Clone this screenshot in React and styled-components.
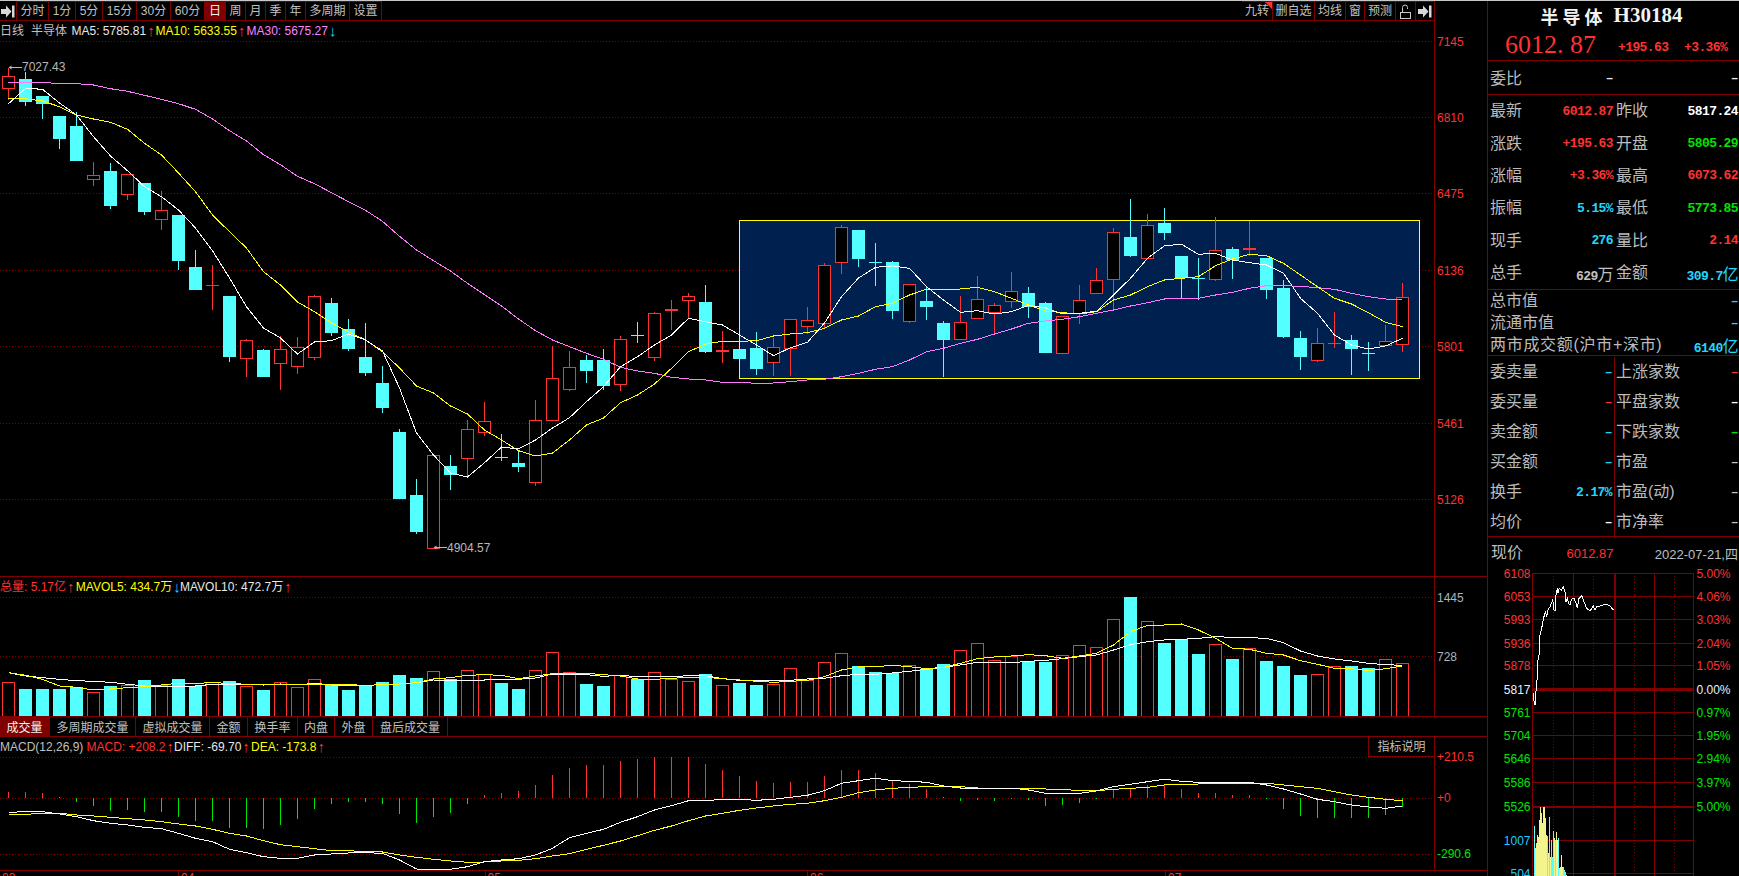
import React from "react";
import styled, { createGlobalStyle } from "styled-components";

const RED = "#ff3232";
const CYAN = "#54ffff";
const DARK = "#800000";
const GREEN = "#00e600";
const SKY = "#20d8ff";
const GRAY = "#c0c0c0";
const SANS = `"Liberation Sans", "Noto Sans CJK SC", sans-serif`;

const candles = [
  [76.3,87.7,67.7,98.7,"r"],[79,101,72,105,"c"],[96,102.7,96,117.7,"c"],[115.7,138,115.7,148,"c"],[126,160,112,160,"c"],
  [175.3,178.7,162.3,185,"r"],[171,205,163,208,"c"],[174.3,193.7,174.3,199,"r"],[183,211,183,214,"c"],[210.3,218.7,191,229,"r"],
  [215,260,215,269,"c"],[267,289,250,289,"c"],[285,285,265,309,"r"],[296,356,296,361,"c"],[340.3,357.7,339,376,"r"],
  [350,376,349,376,"c"],[349.3,362.7,336,389,"r"],[347.3,365.7,337,373,"r"],[296.3,356.7,295,359,"r"],[303,332,298,335,"c"],
  [329,348,319,350,"c"],[357,372,323,375,"c"],[383,407,366,412,"c"],[432,498,429,498,"c"],[495,531,479,533,"c"],
  [455.3,547.7,455.3,547.7,"r"],[466,474,455,489,"c"],[429.3,457.7,420,477,"r"],[421.3,431.7,402,434.7,"r"],[457,457,434,460,"c"],
  [463,466,450,471,"c"],[420.3,481.7,400,485,"r"],[378.3,419.7,346,420,"r"],[367.3,388.7,351,390,"r"],[360,370,355,382,"c"],
  [360,385,349,389,"c"],[339.3,383.7,336,390,"r"],[335,335,322,342,"c"],[313.3,356.7,312,360,"r"],[309,311,300,329,"r"],
  [296.3,299.7,293,318,"r"],[302,351,285,352,"c"],[350,352,331,362,"r"],[349,358,349,358,"c"],[348,368,332,374,"c"],
  [347.3,361.7,338,375,"r"],[319.3,347.7,319.3,375,"r"],[320,325.7,307,333,"r"],[265.3,322.7,263,328,"r"],[227.3,261.7,225,273,"r"],
  [230,258,230,266,"c"],[262,262,243,285,"c"],[262,310,261,318,"c"],[284.3,320.7,284.3,322,"r"],[301,306,287,319,"c"],
  [323,339,321,376,"c"],[322.3,338.7,296,338.7,"r"],[299.3,317.7,276,317.7,"r"],[305.3,311.7,303,334,"r"],[291.3,300.7,272,307,"r"],
  [293,306,287,317,"c"],[303,352,302,352,"c"],[316.3,352.7,316.3,352.7,"r"],[300.3,312.7,285,323,"r"],[280.3,292.7,268,292.7,"r"],
  [232.3,279.3,228,310,"r"],[237,255,199,256,"c"],[225.3,257.7,214,257.7,"r"],[223,232,208,239,"c"],[256,277,256,298,"c"],
  [278,278,258,299,"c"],[250.3,278.7,217,280,"r"],[249,259,247,278,"c"],[248,250,221,255,"r"],[258,289,258,298,"c"],
  [288,336,280,337,"c"],[338,356,331,369,"c"],[343.3,360,328,361,"r"],[343,343,312,347,"r"],[340,348,335,374,"c"],
  [353,353,342,370,"c"],[341.3,344.7,325,344.7,"r"],[297.3,343.7,283,351,"r"],
];

const ma5 = [103.7,88.3,89.3,103,115,136.7,156,170.7,186.7,196.7,210,228,250.7,278,306.7,328,338,354,342,340.7,334,340,351,388,433,455,473,477,462.7,447,449,440,428,417.7,401.7,386.7,366.7,356.7,345,335,318.3,321.7,325,335,345,355.7,347.7,342.3,323,296.7,278,267.3,266,268.3,286.7,300,312.3,310.7,314,311.7,305.3,308,314,313.3,311.3,295,278.3,258.3,245.7,244.3,254.3,253.3,260,262.7,265,273.3,298.3,313.3,335,345,349,346,338.3];
const ma10 = [98.3,98.7,101,106.7,115,119,122.3,129.3,143.3,155,173,191.7,215,231.7,248,271.7,285,302,311.7,323,331.7,340,351.7,368,386,393,406,414,430,440,450.7,456,453,440,425,418,402.7,395,384,368.3,351.7,344,341.3,341.3,340.7,336,334,332.7,328.3,320,316,306.7,303.3,295,289.3,289.3,289,287.3,291.7,298.3,305,311,312.7,314,311.7,300,295,286.7,280,278.3,276.7,265.7,259,254.3,255.7,263.3,275,286.7,298.3,304,312.7,322.3,326.7];
const ma30 = [82.7,82,82.7,83.3,83.7,85,88.7,91.3,95.3,99.3,103.7,109.3,119,130.7,141,154.7,164.7,176.3,183.7,192.7,201.7,210.3,221.3,236.3,250,260.7,271,283.3,294.7,306,319,330.7,340,346.7,353.3,359.3,367.3,371,373.3,377.3,379,380,382.3,382.3,383.3,383,381.7,380,379.3,376.7,373.3,369.3,366.7,360,351.7,348.3,343.3,339.3,334,329,323.3,321,319.3,316.7,313.3,310,306,302.7,299,298.3,298.3,295,292.3,288.3,285.7,285.7,286.3,287.7,289.3,293.3,296.7,299,299.3];

// the lower panes were read in a zoom where y = (page y - 570) * 3
const lower = (v) => 570 + v / 3;
const volTop = [337,357,357,357,351,367,348,346,330,344,327,348,336,333,348,360,337,352,328,345,360,345,336,315,324,304,327,301,313,339,357,301,247,307,342,348,314,327,307,328,334,312,346,339,345,343,295,329,277,250,289,306,309,286,296,282,241,220,271,259,274,276,256,226,232,148,81,154,219,208,252,223,267,235,273,288,315,313,289,288,294,268,280];
const mavol10 = [308,318,323,328,332,334,337,343,348,348,348,348,343,342,343,345,343,345,340,345,346,346,344,342,338,330,330,330,330,328,328,324,312,312,314,319,316,320,320,320,317,317,326,331,331,331,331,327,325,317,313,313,309,304,298,292,285,277,278,278,274,271,266,260,255,240,224,215,210,208,205,200,202,203,205,218,243,258,267,273,280,284,286];
const mavol5 = [308,316,328,348,352,360,357,353,350,345,340,340,338,340,343,345,342,345,343,345,344,346,344,342,338,327,323,316,314,316,326,318,311,310,310,314,318,327,328,325,322,322,326,330,334,337,334,331,320,300,290,290,286,290,296,292,280,266,261,258,254,257,265,258,250,225,185,166,165,162,180,205,235,238,250,255,272,283,295,296,302,296,288];
const hist = [667,666,669,681,696,708,723,720,726,726,741,753,753,774,774,777,765,747,717,702,696,696,702,732,759,741,729,702,675,669,663,645,615,594,585,585,573,567,561,561,561,582,600,618,633,639,636,636,618,600,600,609,633,642,657,682,693,690,693,688,690,708,705,699,688,657,657,645,642,657,669,669,675,675,688,717,738,744,744,744,744,735,711];
const greenTiny = new Set([3, 55]);
const diff = [727,725,725,732,740,752,760,765,772,776,790,805,815,838,848,860,865,865,855,852,849,848,850,870,897,898,898,890,875,870,866,855,835,803,790,778,757,740,720,707,692,691,689,688,691,688,682,676,662,640,632,625,632,634,637,648,654,654,654,654,660,670,670,670,663,650,643,635,628,634,637,637,637,637,645,657,672,688,695,705,711,715,708];
const dea = [733,733,730,730,735,738,742,746,750,755,762,768,778,790,798,812,824,830,836,842,842,845,846,855,862,868,873,877,876,873,871,866,858,851,838,826,813,797,781,768,752,738,730,721,714,708,703,700,692,682,668,660,655,652,650,650,650,654,654,654,655,657,658,662,662,658,655,652,645,643,642,640,640,640,640,645,650,655,665,675,682,688,692];

const cx = (i) => 8.5 + 17 * i;
const pts = (arr, f = (v) => v) => arr.map((v, i) => `${cx(i)},${f(v).toFixed(1)}`).join(" ");

const GlobalStyle = createGlobalStyle`
  html, body { margin: 0; padding: 0; background: #000; overflow: hidden; }
  * { box-sizing: border-box; }
`;

const Root = styled.div`
  display: flex;
  width: 1739px;
  height: 876px;
  overflow: hidden;
  background: #000;
  border-top: 1px solid #c8c8c8;
  font-family: ${SANS};
  font-size: 12px;
  color: ${GRAY};
`;
const Main = styled.main`
  display: flex;
  flex-direction: column;
  width: 1487px;
  flex: none;
`;
const Pane = styled.section`
  display: grid;
  grid-template-columns: 1434px 53px;
  border-bottom: 1px solid ${DARK};
  height: ${(p) => p.$h}px;
  flex: none;
`;
const PaneBody = styled.div`
  display: flex;
  flex-direction: column;
  min-width: 0;
`;
const Axis = styled.div`
  border-left: 1px solid ${DARK};
  padding: ${(p) => p.$top}px 0 0 2px;
`;
const AxisTick = styled.div`
  height: ${(p) => p.$h}px;
  line-height: 16px;
  color: ${(p) => p.$c};
`;
const Toolbar = styled.nav`
  display: flex;
  height: 20px;
  flex: none;
  border-bottom: 1px solid ${DARK};
`;
const ToolGroup = styled.div`
  display: flex;
  margin-left: ${(p) => (p.$end ? "auto" : "0")};
`;
const ToolButton = styled.div`
  position: relative;
  display: flex;
  align-items: center;
  justify-content: center;
  width: ${(p) => p.$w}px;
  height: 19px;
  border-top: 1px solid ${DARK};
  border-right: ${(p) => (p.$last ? "0" : `1px solid ${DARK}`)};
  background: ${(p) => (p.$active ? DARK : "transparent")};
  color: ${(p) => (p.$active ? "#f0f0f0" : GRAY)};
  font-size: 12px;
  line-height: 18px;
  white-space: nowrap;
`;
const IconCell = styled(ToolButton)`
  border-top-color: ${(p) => (p.$plain ? "transparent" : DARK)};
`;
const Corner = styled.i`
  position: absolute;
  top: 0;
  right: 0;
  border-style: solid;
  border-width: 0 7px 7px 0;
  border-color: transparent ${RED} transparent transparent;
`;
const LegendRow = styled.div`
  display: flex;
  align-items: center;
  height: 20px;
  flex: none;
  white-space: nowrap;
  line-height: 20px;
`;
const Legend = styled.span`
  display: inline-block;
  flex: none;
  width: ${(p) => (p.$w ? `${p.$w}px` : "auto")};
  color: ${(p) => p.$c || GRAY};
`;
const Arrow = styled.span`
  display: inline-block;
  margin-left: 1px;
  color: ${(p) => p.$c};
  font-size: 15px;
  line-height: 14px;
  width: 6px;
  vertical-align: -1px;
`;
const IndexNote = styled.div`
  display: flex;
  align-items: center;
  justify-content: center;
  flex: none;
  width: 66px;
  height: 20px;
  margin-left: auto;
  border-left: 1px solid ${DARK};
  border-bottom: 1px solid ${DARK};
`;
const Chart = styled.svg`
  display: block;
  flex: none;
`;
const ChartText = styled.text`
  font-family: ${SANS};
  font-size: 12px;
  fill: ${(p) => p.$c || "#b8b8b8"};
`;
const TabBar = styled.div`
  display: flex;
  height: 20px;
  flex: none;
  border-bottom: 1px solid ${DARK};
`;
const Tab = styled.div`
  display: flex;
  align-items: center;
  justify-content: center;
  width: ${(p) => p.$w}px;
  height: 19px;
  border-right: 1px solid ${DARK};
  background: ${(p) => (p.$active ? DARK : "transparent")};
  color: ${(p) => (p.$active ? "#f4f4f4" : GRAY)};
  font-size: 12px;
`;
const TimeRow = styled.div`
  display: flex;
  flex: 1;
  overflow: hidden;
`;
const TimeCell = styled.div`
  width: ${(p) => p.$w}px;
  flex: none;
  padding-left: 2px;
  border-left: ${(p) => (p.$tick ? `1px solid ${DARK}` : "0")};
  color: ${RED};
  font-size: 12px;
  line-height: 14px;
`;

const Panel = styled.aside`
  display: flex;
  flex-direction: column;
  flex: 1;
  min-width: 0;
  border-left: 1px solid ${DARK};
`;
const Block = styled.div`
  flex: none;
  height: ${(p) => p.$h}px;
  border-bottom: ${(p) => (p.$line ? `1px solid ${DARK}` : "0")};
`;
const Title = styled.h1`
  display: flex;
  align-items: center;
  justify-content: center;
  gap: 7px;
  height: 29px;
  margin: 0 0 0 -4px;
  color: #f2f2f2;
  font: bold 21px "Liberation Serif", serif;
`;
const TitleName = styled.span`
  font: bold 18px "Noto Sans CJK SC", sans-serif;
  letter-spacing: 4px;
`;
const PriceLine = styled.div`
  display: flex;
  align-items: center;
  height: 30px;
  padding-left: 17px;
`;
const BigPrice = styled.span`
  width: 113px;
  flex: none;
  color: ${RED};
  font: 26px "Liberation Serif", serif;
  white-space: pre;
`;
const numeric = `
  font-family: "Liberation Mono", "Noto Sans CJK SC", monospace;
  font-weight: bold;
  font-size: 13px;
  letter-spacing: -0.6px;
`;
const Change = styled.span`
  ${numeric}
  width: ${(p) => p.$w}px;
  flex: none;
  padding-top: 5px;
  color: ${RED};
`;
const Row = styled.div`
  display: flex;
  align-items: center;
  justify-content: space-between;
  height: ${(p) => p.$h}px;
  padding: 0 1px 0 2px;
`;
const Label = styled.span`
  color: #bcbcbc;
  font-size: 16px;
  line-height: 18px;
  white-space: nowrap;
  letter-spacing: ${(p) => p.$track || 0}px;
`;
const Value = styled.span`
  ${numeric}
  color: ${(p) => p.$c};
  white-space: nowrap;
`;
const Unit = styled.span`
  font: 16px "Noto Sans CJK SC", sans-serif;
`;
const StatGrid = styled.div`
  display: grid;
  grid-template-columns: 127px 1fr;
  grid-auto-rows: ${(p) => p.$row}px;
  padding-top: ${(p) => p.$pad || 0}px;
`;
const Cell = styled.div`
  display: flex;
  align-items: center;
  justify-content: space-between;
  min-width: 0;
  padding: ${(p) => (p.$right ? "0 1px 0 1px" : "0 2px 0 2px")};
  border-right: ${(p) => (p.$divide ? `1px solid ${DARK}` : "0")};
`;
const Blank = styled.span``;
const QuoteRow = styled.div`
  display: flex;
  align-items: center;
  justify-content: space-between;
  height: 26px;
  padding: 6px 1px 0 3px;
  flex: none;
`;
const QuotePrice = styled.span`
  margin-left: 2px;
  color: ${RED};
  font-size: 13px;
`;
const QuoteDate = styled.span`
  color: #b8c0c8;
  font-size: 13px;
`;

const JumpIcon = () => (
  <svg width="14" height="13" viewBox="0 0 14 13" fill="#d8d8d8">
    <path d="M0 4h5V0.5L10.5 6.5 5 12.5V9H0z" />
    <rect x="11" y="0.5" width="2.5" height="12" />
  </svg>
);
const LockIcon = () => (
  <svg width="13" height="15" viewBox="0 0 13 15" fill="none" stroke="#c8c8c8" strokeWidth="1" shapeRendering="crispEdges">
    <rect x="1.5" y="8.5" width="10" height="6" />
    <path d="M3.5 8V3.5Q3.5 1 6 1T8.5 3.5V5" shapeRendering="auto" />
  </svg>
);

const Grid = ({ ys }) =>
  ys.map((y) => (
    <line key={y} x1="0" x2="1434" y1={y + 0.5} y2={y + 0.5} stroke={DARK} strokeDasharray="1 2" shapeRendering="crispEdges" />
  ));

const Line = ({ points, c }) => (
  <polyline points={points} fill="none" stroke={c} strokeWidth="1" shapeRendering="crispEdges" />
);

const Candle = ({ d, i }) => {
  const [top, bottom, high, low, kind] = d;
  const x = cx(i);
  const c = kind === "r" ? RED : CYAN;
  const flat = bottom - top < 3;
  const t = Math.round(top);
  const h = Math.round(bottom) - t;
  return (
    <g shapeRendering="crispEdges">
      <line x1={x} x2={x} y1={Math.round(high)} y2={Math.round(low) + 1} stroke={c} />
      {flat ? (
        <rect x={x - 6.5} y={t} width="13" height={Math.max(1, h)} fill={c} />
      ) : kind === "r" ? (
        <rect x={x - 6} y={t + 0.5} width="12" height={h} fill="#000" stroke={c} />
      ) : (
        <rect x={x - 6.5} y={t} width="13" height={h + 1} fill={c} />
      )}
    </g>
  );
};

const PriceChart = () => (
  <Chart width="1434" height="534" viewBox="0 41 1434 534">
    <Grid ys={[41, 117, 193, 270, 346, 423, 499]} />
    <rect x="739.5" y="220.5" width="680" height="158" fill="#002050" stroke="#ffff00" shapeRendering="crispEdges" />
    {candles.map((d, i) => <Candle key={i} d={d} i={i} />)}
    <Line points={pts(ma30)} c="#ff78ff" />
    <Line points={pts(ma10)} c="#ffff00" />
    <Line points={pts(ma5)} c="#ffffff" />
    <path d="M10 67.5h12" stroke="#b8b8b8" shapeRendering="crispEdges" />
    <path d="M8.5 67.5l3-2v4z" fill="#b8b8b8" />
    <ChartText x="22" y="71">7027.43</ChartText>
    <path d="M435 547.5h12" stroke="#b8b8b8" shapeRendering="crispEdges" />
    <path d="M433.5 547.5l3-2v4z" fill="#b8b8b8" />
    <ChartText x="447" y="552">4904.57</ChartText>
  </Chart>
);

const VolumeChart = () => (
  <Chart width="1434" height="119" viewBox="0 597 1434 119">
    <Grid ys={[597, 656]} />
    <g shapeRendering="crispEdges">
      {volTop.map((v, i) => {
        const t = Math.round(lower(v));
        return candles[i][4] === "r" ? (
          <rect key={i} x={cx(i) - 6} y={t + 0.5} width="12" height={716 - t} fill="#000" stroke={RED} />
        ) : (
          <rect key={i} x={cx(i) - 6.5} y={t} width="13" height={716 - t} fill={CYAN} />
        );
      })}
    </g>
    <Line points={pts(mavol10, lower)} c="#ffffff" />
    <Line points={pts(mavol5, lower)} c="#ffff00" />
  </Chart>
);

const MacdChart = () => (
  <Chart width="1434" height="113" viewBox="0 757 1434 113">
    <Grid ys={[757, 798, 854]} />
    <g shapeRendering="crispEdges">
      {hist.map((v, i) => {
        const y = Math.round(lower(v));
        const green = v > 685 || greenTiny.has(i);
        return <line key={i} x1={cx(i)} x2={cx(i)} y1={y} y2={798} stroke={green ? GREEN : RED} />;
      })}
    </g>
    <Line points={pts(dea, lower)} c="#ffff00" />
    <Line points={pts(diff, lower)} c="#ffffff" />
  </Chart>
);

const intraday = "160,400 163,432 167,432 167,405 172,350 174,300 178,280 180,225 185,205 190,178 196,155 200,170 204,150 210,140 218,120 222,150 226,150 228,105 232,85 234,100 238,85 244,90 250,80 256,100 258,125 262,115 266,130 270,135 274,120 278,115 282,115 288,130 292,145 297,115 305,107 312,125 320,145 330,153 335,145 340,138 345,150 350,140 360,138 370,135 380,133 390,138 400,150"
  .split(" ")
  .map((p) => {
    const [x, y] = p.split(",").map(Number);
    return `${(1480 + x / 3).toFixed(1)},${(560 + y / 3).toFixed(1)}`;
  })
  .join(" ");

const miniBars = [
  [132,197,"c"],[136,265,"y"],[139,250,"y"],[142,225,"y"],[145,230,"y"],[148,180,"y"],[151,142,"y"],[154,160,"y"],[157,190,"y"],[160,142,"y"],[163,142,"y"],[166,175,"y"],[169,225,"y"],[172,228,"c"],[175,280,"y"],[178,172,"c"],[181,290,"y"],[184,240,"c"],[187,290,"c"],[190,212,"c"],[193,235,"y"],[196,240,"c"],[199,217,"y"],[202,240,"y"],[205,235,"c"],[208,325,"y"],[211,320,"y"],[214,285,"y"],[217,320,"y"],[220,322,"c"],[223,330,"c"],[226,335,"c"],[229,345,"y"],
];

const miniRows = [
  [573, "6108", "5.00%", RED], [596, "6053", "4.06%", RED], [619, "5993", "3.03%", RED], [643, "5936", "2.04%", RED], [665, "5878", "1.05%", RED],
  [689, "5817", "0.00%", "#e8f0ff"], [712, "5761", "0.97%", GREEN], [735, "5704", "1.95%", GREEN], [758, "5646", "2.94%", GREEN], [782, "5586", "3.97%", GREEN], [806, "5526", "5.00%", GREEN],
];

const MiniChart = () => (
  <Chart width="251" height="313" viewBox="1488 563 251 313">
    <g stroke={DARK} shapeRendering="crispEdges">
      {[1553.5, 1593.5, 1634.5, 1674.5].map((x) => (
        <line key={x} x1={x} x2={x} y1="573" y2="876" strokeDasharray="1 2" />
      ))}
      {[1532.5, 1573.5, 1654.5, 1693.5].map((x) => <line key={x} x1={x} x2={x} y1="573" y2="876" />)}
      <line x1="1615" x2="1615" y1="573" y2="876" strokeWidth="2" />
      {miniRows.map(([y]) => (
        <line key={y} x1="1532" x2="1694" y1={y + 0.5} y2={y + 0.5} strokeWidth={y === 689 ? 3 : y === 806 ? 2 : 1} />
      ))}
      <line x1="1532" x2="1694" y1="840.5" y2="840.5" />
      <line x1="1532" x2="1694" y1="873.5" y2="873.5" />
    </g>
    <g shapeRendering="crispEdges">
      {miniBars.map(([x, y, k]) => (
        <rect key={x} x={1490 + x / 3} y={760 + y / 3} width="1" height={876 - (760 + y / 3)} fill={k === "y" ? "#f4f48c" : CYAN} />
      ))}
    </g>
    <polyline points={intraday} fill="none" stroke="#fff" shapeRendering="crispEdges" />
    {miniRows.map(([y, l, r, c]) => (
      <g key={y}>
        <ChartText x="1530.5" y={y + 4.5} textAnchor="end" $c={c}>{l}</ChartText>
        <ChartText x="1696.5" y={y + 4.5} $c={c}>{r}</ChartText>
      </g>
    ))}
    <ChartText x="1530.5" y="844.5" textAnchor="end" $c="#20c8ff">1007</ChartText>
    <ChartText x="1530.5" y="877.5" textAnchor="end" $c="#20c8ff">504</ChartText>
  </Chart>
);

const leftTools = [["分时",32],["1分",27],["5分",27],["15分",34],["30分",34],["60分",34],["日",21,true],["周",20],["月",20],["季",20],["年",20],["多周期",44],["设置",32]];
const tabs = [["成交量",50,true],["多周期成交量",86],["虚拟成交量",74],["金额",38],["换手率",50],["内盘",37],["外盘",38],["盘后成交量",75]];
const stats = [
  ["最新","6012.87",RED,"昨收","5817.24","#ffffff"],
  ["涨跌","+195.63",RED,"开盘","5805.29",GREEN],
  ["涨幅","+3.36%",RED,"最高","6073.62",RED],
  ["振幅","5.15%",SKY,"最低","5773.85",GREEN],
  ["现手","276",SKY,"量比","2.14",RED],
];
const depth = [
  ["委卖量","–",SKY,"上涨家数","–",RED],
  ["委买量","–",RED,"平盘家数","–","#ffffff"],
  ["卖金额","–",SKY,"下跌家数","–",GREEN],
  ["买金额","–",SKY,"市盈","–",GRAY],
  ["换手","2.17%",SKY,"市盈(动)","–",GRAY],
  ["均价","–","#ffffff","市净率","–",GRAY],
];

export default function App() {
  return (
    <>
      <GlobalStyle />
      <Root>
        <Main>
          <Pane $h={576}>
            <PaneBody>
              <Toolbar>
                <ToolGroup>
                  <IconCell $w={17} $plain><JumpIcon /></IconCell>
                  {leftTools.map(([t, w, a]) => <ToolButton key={t} $w={w} $active={a}>{t}</ToolButton>)}
                </ToolGroup>
                <ToolGroup $end>
                  <ToolButton $w={31}>九转<Corner /></ToolButton>
                  <ToolButton $w={42}>删自选</ToolButton>
                  <ToolButton $w={31}>均线</ToolButton>
                  <ToolButton $w={19}>窗</ToolButton>
                  <ToolButton $w={31}>预测</ToolButton>
                  <IconCell $w={20}><LockIcon /></IconCell>
                  <IconCell $w={18} $last><JumpIcon /></IconCell>
                </ToolGroup>
              </Toolbar>
              <LegendRow>
                <Legend $w={31}>日线</Legend>
                <Legend $w={40.5}>半导体</Legend>
                <Legend $w={84} $c="#e8e8e8">MA5: 5785.81<Arrow $c={RED}>↑</Arrow></Legend>
                <Legend $w={91} $c="#ffff00">MA10: 5633.55<Arrow $c={RED}>↑</Arrow></Legend>
                <Legend $c="#ff80ff">MA30: 5675.27<Arrow $c={SKY}>↓</Arrow></Legend>
              </LegendRow>
              <PriceChart />
            </PaneBody>
            <Axis $top={33}>
              {[["7145",76],["6810",76],["6475",77],["6136",76],["5801",77],["5461",76],["5126",16]].map(([t, h]) => (
                <AxisTick key={t} $h={h} $c={RED}>{t}</AxisTick>
              ))}
            </Axis>
          </Pane>
          <Pane $h={140}>
            <PaneBody>
              <LegendRow>
                <Legend $w={75.8} $c={RED}>总量: 5.17亿<Arrow $c={RED}>↑</Arrow></Legend>
                <Legend $w={104.2} $c="#ffff00">MAVOL5: 434.7万<Arrow $c={SKY}>↓</Arrow></Legend>
                <Legend $c="#e8e8e8">MAVOL10: 472.7万<Arrow $c={RED}>↑</Arrow></Legend>
              </LegendRow>
              <VolumeChart />
            </PaneBody>
            <Axis $top={13}>
              <AxisTick $h={59} $c="#a8b4c0">1445</AxisTick>
              <AxisTick $h={16} $c="#a8b4c0">728</AxisTick>
            </Axis>
          </Pane>
          <TabBar>
            {tabs.map(([t, w, a]) => <Tab key={t} $w={w} $active={a}>{t}</Tab>)}
          </TabBar>
          <Pane $h={134}>
            <PaneBody>
              <LegendRow>
                <Legend $w={86.5}>MACD(12,26,9)</Legend>
                <Legend $w={87.5} $c={RED}>MACD: +208.2<Arrow $c={RED}>↑</Arrow></Legend>
                <Legend $w={77} $c="#e8e8e8">DIFF: -69.70<Arrow $c={RED}>↑</Arrow></Legend>
                <Legend $c="#ffff00">DEA: -173.8<Arrow $c={RED}>↑</Arrow></Legend>
                <IndexNote>指标说明</IndexNote>
              </LegendRow>
              <MacdChart />
            </PaneBody>
            <Axis $top={12}>
              <AxisTick $h={41} $c={RED}>+210.5</AxisTick>
              <AxisTick $h={56} $c={RED}>+0</AxisTick>
              <AxisTick $h={16} $c={GREEN}>-290.6</AxisTick>
            </Axis>
          </Pane>
          <TimeRow>
            <TimeCell $w={178}>03</TimeCell>
            <TimeCell $w={306.5} $tick>04</TimeCell>
            <TimeCell $w={322.5} $tick>05</TimeCell>
            <TimeCell $w={358} $tick>06</TimeCell>
            <TimeCell $w={60} $tick>07</TimeCell>
          </TimeRow>
        </Main>
        <Panel>
          <Block $h={60} $line>
            <Title><TitleName>半导体</TitleName>H30184</Title>
            <PriceLine>
              <BigPrice>6012. 87</BigPrice>
              <Change $w={66}>+195.63</Change>
              <Change $w={50}>+3.36%</Change>
            </PriceLine>
          </Block>
          <Block $h={34} $line>
            <StatGrid $row={33} $pad={1}>
              <Cell><Label>委比</Label><Value $c="#e8e8e8">–</Value></Cell>
              <Cell $right><Blank /><Value $c="#e8e8e8">–</Value></Cell>
            </StatGrid>
          </Block>
          <Block $h={195} $line>
            <StatGrid $row={32.4}>
              {stats.map(([a, av, ac, b, bv, bc]) => (
                <React.Fragment key={a}>
                  <Cell><Label>{a}</Label><Value $c={ac}>{av}</Value></Cell>
                  <Cell $right><Label>{b}</Label><Value $c={bc}>{bv}</Value></Cell>
                </React.Fragment>
              ))}
              <Cell><Label>总手</Label><Value $c={GRAY}>629<Unit>万</Unit></Value></Cell>
              <Cell $right><Label>金额</Label><Value $c={SKY}>309.7<Unit>亿</Unit></Value></Cell>
            </StatGrid>
          </Block>
          <Block $h={66} $line>
            <Row $h={22}><Label>总市值</Label><Value $c={SKY}>–</Value></Row>
            <Row $h={22}><Label>流通市值</Label><Value $c={SKY}>–</Value></Row>
            <Row $h={22}><Label $track={0.7}>两市成交额(沪市+深市)</Label><Value $c={SKY}>6140<Unit>亿</Unit></Value></Row>
          </Block>
          <Block $h={181} $line>
            <StatGrid $row={30} $pad={1}>
              {depth.map(([a, av, ac, b, bv, bc]) => (
                <React.Fragment key={a}>
                  <Cell $divide><Label>{a}</Label><Value $c={ac}>{av}</Value></Cell>
                  <Cell $right><Label>{b}</Label><Value $c={bc}>{bv}</Value></Cell>
                </React.Fragment>
              ))}
            </StatGrid>
          </Block>
          <QuoteRow>
            <Label>现价</Label>
            <QuotePrice>6012.87</QuotePrice>
            <QuoteDate>2022-07-21,四</QuoteDate>
          </QuoteRow>
          <MiniChart />
        </Panel>
      </Root>
    </>
  );
}
